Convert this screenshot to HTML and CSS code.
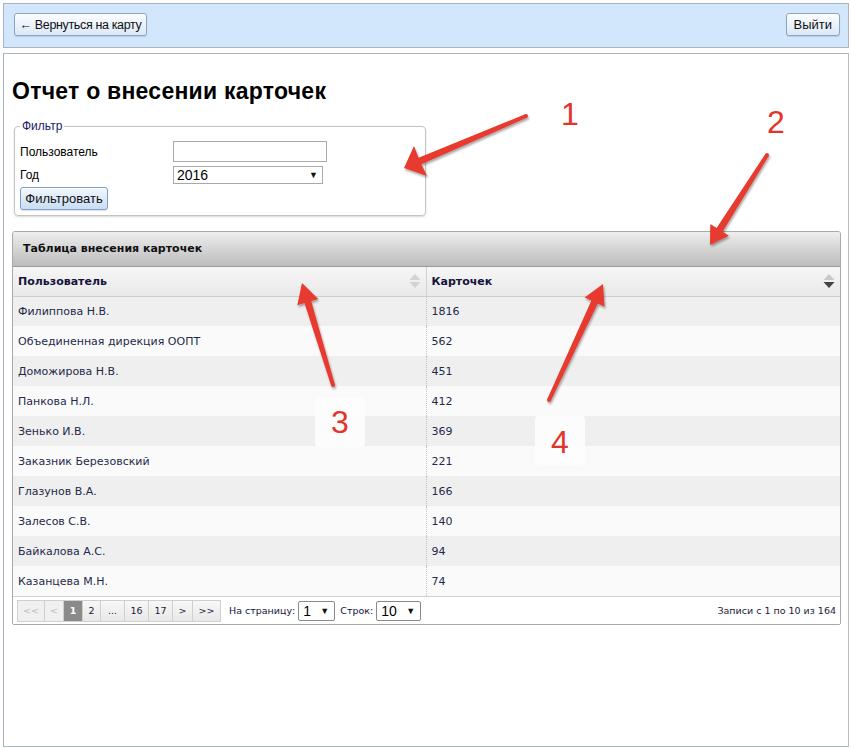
FILE: index.html
```html
<!DOCTYPE html>
<html lang="ru">
<head>
<meta charset="utf-8">
<title>Отчет о внесении карточек</title>
<link rel="stylesheet" href="styles.css">
</head>
<body>
<div class="topbar">
  <button class="btn btn-top btn-back">← Вернуться на карту</button>
  <button class="btn btn-top">Выйти</button>
</div>
<div class="main">
  <h1 class="title">Отчет о внесении карточек</h1>
  <fieldset class="filter">
    <legend class="legend">Фильтр</legend>
    <div class="frow frow-first">
      <label class="flabel">Пользователь</label>
      <input class="finput" type="text">
    </div>
    <div class="frow frow-second">
      <label class="flabel">Год</label>
      <div class="fselect"><span>2016</span><span class="arrow">▼</span></div>
    </div>
    <button class="btn btn-filter">Фильтровать</button>
  </fieldset>

  <div class="panel">
    <div class="panel-head">Таблица внесения карточек</div>
    <table class="grid">
      <thead>
        <tr>
          <th class="c1"><div class="th-in"><span>Пользователь</span>
            <svg class="sort" width="12" height="16" viewBox="0 0 12 16"><polygon points="6,1 11.5,7 0.5,7" fill="#d2d2d2"/><polygon points="6,15 11.5,9 0.5,9" fill="#d2d2d2"/></svg></div></th>
          <th class="c2"><div class="th-in"><span>Карточек</span>
            <svg class="sort" width="12" height="16" viewBox="0 0 12 16"><polygon points="6,1 11.5,7 0.5,7" fill="#c8c8c8"/><polygon points="6,15 11.5,9 0.5,9" fill="#444"/></svg></div></th>
        </tr>
      </thead>
      <tbody>
        <tr class="odd"><td class="c1">Филиппова Н.В.</td><td class="c2">1816</td></tr>
        <tr class="even"><td class="c1">Объединенная дирекция ООПТ</td><td class="c2">562</td></tr>
        <tr class="odd"><td class="c1">Доможирова Н.В.</td><td class="c2">451</td></tr>
        <tr class="even"><td class="c1">Панкова Н.Л.</td><td class="c2">412</td></tr>
        <tr class="odd"><td class="c1">Зенько И.В.</td><td class="c2">369</td></tr>
        <tr class="even"><td class="c1">Заказник Березовский</td><td class="c2">221</td></tr>
        <tr class="odd"><td class="c1">Глазунов В.А.</td><td class="c2">166</td></tr>
        <tr class="even"><td class="c1">Залесов С.В.</td><td class="c2">140</td></tr>
        <tr class="odd"><td class="c1">Байкалова А.С.</td><td class="c2">94</td></tr>
        <tr class="even"><td class="c1">Казанцева М.Н.</td><td class="c2">74</td></tr>
      </tbody>
    </table>
    <div class="pager">
      <div class="pages">
        <span class="pg pg-dis w27">&lt;&lt;</span>
        <span class="pg pg-dis w19">&lt;</span>
        <span class="pg pg-cur w19">1</span>
        <span class="pg w18">2</span>
        <span class="pg w24">...</span>
        <span class="pg w24">16</span>
        <span class="pg w24">17</span>
        <span class="pg w20">&gt;</span>
        <span class="pg w28">&gt;&gt;</span>
      </div>
      <span class="plabel pl-first">На страницу:</span>
      <div class="psel ps-page"><span>1</span><span class="arrow">▼</span></div>
      <span class="plabel">Строк:</span>
      <div class="psel ps-rows"><span>10</span><span class="arrow">▼</span></div>
      <span class="pinfo">Записи с 1 по 10 из 164</span>
    </div>
  </div>
</div>

<svg class="annot" width="851" height="748" viewBox="0 0 851 748">
  <defs>
    <filter id="sh" x="-20%" y="-20%" width="140%" height="140%">
      <feDropShadow dx="1" dy="2" stdDeviation="1.2" flood-color="#000" flood-opacity="0.35"/>
    </filter>
  </defs>
  <g fill="#e63a2e" filter="url(#sh)">
    <polygon points="525.2,114.2 526.8,117.8 421.4,164.2 427,176 404,168 414,146 418.6,157.8"/>
    <circle cx="526" cy="116" r="2"/>
    <polygon points="765.3,153.9 768.7,156.1 722.6,231.7 728.9,235.7 710,245 710.3,223.9 716.6,227.9"/>
    <circle cx="767" cy="155" r="2"/>
    <polygon points="331.1,385.6 334.9,384.4 311.2,301.1 318.3,298.9 302,283 297.3,305.3 304.5,303.1"/>
    <circle cx="333" cy="385" r="2"/>
    <polygon points="547.2,399.2 550.8,400.8 597.8,303.6 604.6,306.7 603,284 584.6,297.5 591.4,300.6"/>
    <circle cx="549" cy="400" r="2"/>
  </g>
  <rect x="315" y="398" width="50" height="49" rx="4" fill="#fdfdfd" fill-opacity="0.92"/>
  <rect x="535" y="416" width="50" height="49" rx="4" fill="#fdfdfd" fill-opacity="0.92"/>
  <g class="num" fill="#e3342a">
    <text x="570" y="125" text-anchor="middle">1</text>
    <text x="776" y="133" text-anchor="middle">2</text>
    <text x="340" y="433" text-anchor="middle">3</text>
    <text x="560" y="453" text-anchor="middle">4</text>
  </g>
</svg>
</body>
</html>
```
FILE: styles.css
```css
* { box-sizing: border-box; }

body {
  margin: 0;
  background: #ffffff;
  font-family: "Liberation Sans", Arial, sans-serif;
  color: #111;
  position: relative;
  width: 851px;
  height: 748px;
  overflow: hidden;
}

.topbar {
  margin: 3px 2px 0 3px;
  height: 45px;
  border: 1px solid #aab4be;
  background: #d2e7fb;
  display: flex;
  justify-content: space-between;
  align-items: center;
  padding: 0 8px 0 10px;
}

.btn {
  font-family: "Liberation Sans", Arial, sans-serif;
  color: #111;
  border: 1px solid #8aa6c4;
  border-radius: 3px;
  background: linear-gradient(#fcfdff, #dbe8f6);
  box-shadow: inset 0 1px 0 #ffffff, 0 1px 1px rgba(0,0,0,0.12);
  cursor: pointer;
}

.btn-top {
  height: 23px;
  font-size: 13px;
  padding: 0 7px;
  margin-top: -2px;
}

.btn-back {
  width: 133px;
  font-size: 12.5px;
  letter-spacing: -0.35px;
  padding: 0;
}

.main {
  margin: 5px 2px 0 3px;
  height: 694px;
  border: 1px solid #aab4be;
  border-right-color: #b8bec6;
  padding: 0 7px 0 8px;
}

.title {
  margin: 24px 0 15px 0;
  font-size: 23px;
  line-height: 26px;
  letter-spacing: 0.25px;
  font-weight: bold;
  color: #000;
}

.filter {
  margin: 0 0 15px 2px;
  width: 412px;
  height: 97px;
  border: 1px solid #c4c4c4;
  border-radius: 4px;
  box-shadow: 0 1px 2px rgba(0,0,0,0.15);
  padding: 0 5px 5px 5px;
}

.legend {
  font-size: 12px;
  line-height: 14px;
  padding: 0 2px;
  color: #1a1a6a;
}

.frow {
  display: flex;
  align-items: center;
}

.frow-first { margin-top: 8px; height: 21px; }
.frow-second { margin-top: 4px; height: 18px; }

.flabel {
  width: 153px;
  font-size: 12px;
  color: #000;
}

.finput {
  width: 154px;
  height: 21px;
  border: 1px solid #a9a9a9;
  padding: 0 2px;
  margin: 0;
  font-size: 13px;
}

.fselect {
  width: 150px;
  height: 18px;
  border: 1px solid #a9a9a9;
  display: flex;
  align-items: center;
  justify-content: space-between;
  padding: 0 4px 0 3px;
  font-size: 14px;
  color: #000;
}

.arrow {
  font-size: 9px;
  color: #111;
}

.btn-filter {
  margin-top: 3px;
  width: 88px;
  height: 23px;
  font-size: 13px;
  padding: 0;
  background: linear-gradient(#f2f7fd, #c8ddf4);
  border-color: #7e9fc6;
}

.panel {
  border: 1px solid #a9a9a9;
  border-radius: 3px 3px 2px 2px;
  font-family: "DejaVu Sans", Verdana, sans-serif;
  overflow: hidden;
}

.panel-head {
  height: 35px;
  border-bottom: 1px solid #9a9a9a;
  background: linear-gradient(#eeeeee, #bcbcbc);
  font-size: 11px;
  font-weight: bold;
  color: #111;
  display: flex;
  align-items: center;
  padding-left: 10px;
  padding-bottom: 1px;
}

.grid {
  width: 100%;
  border-collapse: collapse;
  table-layout: fixed;
}

.grid th {
  height: 29px;
  padding: 0;
  background: linear-gradient(#f6f6f6, #e9e9e9);
  border-bottom: 1px solid #cdcdcd;
  text-align: left;
  font-size: 11px;
  font-weight: bold;
  color: #14143a;
}

.grid th.c1 { width: 413px; border-right: 1px solid #d2d2d2; }

.th-in {
  display: flex;
  align-items: center;
  justify-content: space-between;
  padding: 0 5px 0 5px;
}

.sort { display: block; }

.grid td {
  height: 30px;
  padding: 0 5px;
  font-size: 11px;
  color: #1f2a4a;
  white-space: nowrap;
}

.grid td.c2 { border-left: 1px dotted #c4c4c4; }

.grid tr.odd td { background: #efefef; }
.grid tr.even td { background: #fafafa; }

.pager {
  height: 28px;
  border-top: 1px solid #cfcfcf;
  display: flex;
  align-items: center;
  padding: 0 4px 0 4px;
  font-size: 9.5px;
  color: #222;
  background: #ffffff;
}

.pages {
  display: flex;
  border: 1px solid #cfcfcf;
  border-right: none;
}

.pg {
  height: 20px;
  display: flex;
  align-items: center;
  justify-content: center;
  border-right: 1px solid #cfcfcf;
  background: linear-gradient(#f8f8f8, #e8e8e8);
  color: #1a1a3a;
  font-size: 9.5px;
}

.pg-dis { color: #bdbdbd; background: #f0f0f0; }
.pg-cur { background: #8a8a8a; color: #ffffff; font-weight: bold; }

.w18 { width: 18px; }
.w19 { width: 19px; }
.w20 { width: 20px; }
.w24 { width: 24px; }
.w27 { width: 27px; }
.w28 { width: 28px; }

.plabel { color: #14143a; margin-right: 3px; }
.pl-first { margin-left: 8px; }

.psel {
  height: 20px;
  border: 1px solid #8a8a8a;
  border-radius: 2px;
  display: flex;
  align-items: center;
  justify-content: space-between;
  padding: 0 5px 0 4px;
  font-family: "Liberation Sans", Arial, sans-serif;
  font-size: 14px;
  color: #000;
  margin-right: 5px;
}

.ps-page { width: 37px; }
.ps-rows { width: 45px; }

.pinfo {
  margin-left: auto;
  color: #1a1a3a;
}

.annot {
  position: absolute;
  left: 0;
  top: 0;
  pointer-events: none;
}

.num text {
  font-family: "Liberation Sans", Arial, sans-serif;
  font-size: 32px;
}
```
